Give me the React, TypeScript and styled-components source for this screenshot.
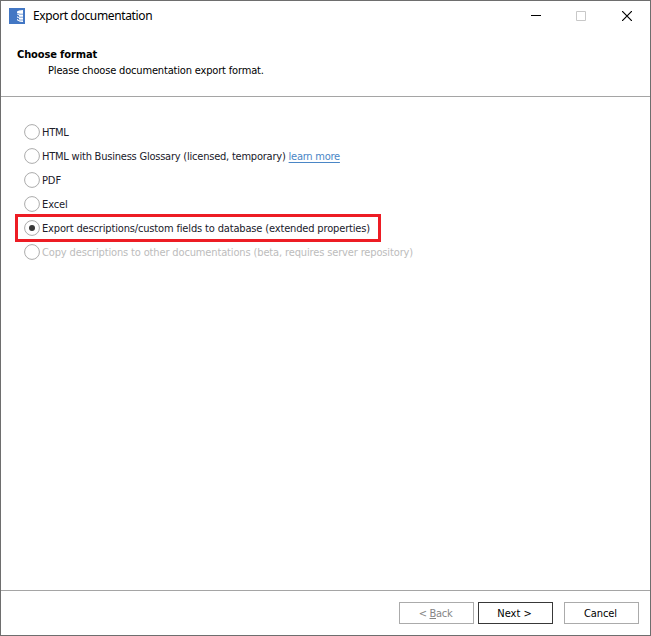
import React from "react";
import styled, { createGlobalStyle } from "styled-components";

const GlobalStyle = createGlobalStyle`
  * { box-sizing: border-box; }
  body { margin: 0; background: #fff; }
`;

const Dialog = styled.main`
  width: 651px;
  height: 636px;
  display: flex;
  flex-direction: column;
  border: 1px solid #6e6e6e;
  background: #fff;
  color: #000;
  font: 11px/16px "DejaVu Sans Condensed", "Noto Sans", sans-serif;
  overflow: hidden;
`;

const TitleBar = styled.header`
  display: flex;
  align-items: center;
  height: 29px;
  flex: none;
  padding-left: 8px;
`;

const AppIcon = styled.svg`
  width: 16px;
  height: 16px;
  flex: none;
`;

const Text = styled.span<{ $track?: number }>`
  letter-spacing: ${(p) => p.$track ?? 0}px;
  white-space: pre;
`;

const WindowTitle = styled(Text)`
  margin-left: 8px;
  font: 12px/16px "Noto Sans", sans-serif;
`;

const WindowControls = styled.div`
  display: flex;
  margin-left: auto;
`;

const ControlButton = styled.button<{ $w: number }>`
  width: ${(p) => p.$w}px;
  height: 29px;
  padding: 0;
  border: 0;
  background: none;
  display: grid;
  place-items: center;
`;

const Heading = styled.section`
  height: 67px;
  flex: none;
  display: flex;
  flex-direction: column;
  align-items: flex-start;
  padding: 17px 0 0 16px;
  border-bottom: 1px solid #a5a5a5;
`;

const HeadingTitle = styled(Text)`
  font-weight: bold;
`;

const HeadingText = styled(Text)`
  margin-left: 31px;
`;

const Options = styled.section`
  flex: 1;
  display: flex;
  flex-direction: column;
  align-items: flex-start;
  padding: 23px 0 0 14px;
`;

const Option = styled.label<{ $disabled?: boolean; $marked?: boolean }>`
  display: flex;
  align-items: center;
  height: ${(p) => (p.$marked ? 28 : 24)}px;
  width: ${(p) => (p.$marked ? "366px" : "auto")};
  margin: ${(p) => (p.$marked ? "-2px 0" : "0")};
  padding-left: ${(p) => (p.$marked ? 6 : 9)}px;
  border: ${(p) => (p.$marked ? "3px solid #ed1c24" : "0")};
  color: ${(p) => (p.$disabled ? "#bcbcbc" : "#20202a")};
`;

const OptionText = styled(Text)`
  padding-top: 2px;
`;

const Radio = styled.svg`
  width: 16px;
  height: 16px;
  margin-right: 2px;
  flex: none;
`;

const Link = styled.a`
  margin-left: 3px;
  padding-top: 2px;
  color: #4a86c6;
  letter-spacing: -0.25px;
  text-decoration: underline;
  text-underline-offset: 2px;
  text-decoration-thickness: 1px;
  white-space: nowrap;
`;

const Footer = styled.footer`
  height: 45px;
  flex: none;
  display: flex;
  justify-content: flex-end;
  align-items: flex-start;
  padding: 11px 11px 0 0;
  border-top: 1px solid #a5a5a5;
`;

const Button = styled.button<{ $primary?: boolean }>`
  width: 75px;
  height: 22px;
  margin-right: ${(p) => (p.$primary ? 11 : 0)}px;
  padding: 2px 2px 0 0;
  border: 1px solid ${(p) => (p.$primary ? "#383838" : "#ababab")};
  background: #fff;
  color: #000;
  font: inherit;
  &:disabled { color: #868686; margin-right: 4px; }
`;

const options = [
  { label: "HTML", track: -0.3 },
  { label: "HTML with Business Glossary (licensed, temporary)", track: -0.22, link: "learn more" },
  { label: "PDF", track: -0.1 },
  { label: "Excel", track: -0.1 },
  { label: "Export descriptions/custom fields to database (extended properties)", track: -0.155, selected: true },
  { label: "Copy descriptions to other documentations (beta, requires server repository)", track: -0.14, disabled: true },
];

export default function App() {
  return (
    <>
      <GlobalStyle />
      <Dialog>
        <TitleBar>
          <AppIcon viewBox="0 0 16 16">
            <path fill="#4377c4" d="M0 0h16v16H0z" />
            <path fill="#fff" d="M8 3.500 10 2.500 14 2v12l-3-.2-3-1.600v-1.200l2 .7v-1.400L8 9.600V8.200l2 .8V7.500L8 6.200z" />
            <path stroke="#4377c4" strokeWidth=".7" fill="none" d="m8 5.300 3 .9h3M9 8.600l2 .6h3M9 11.400l2 .6h3" />
          </AppIcon>
          <WindowTitle $track={-0.36}>Export documentation</WindowTitle>
          <WindowControls>
            <ControlButton $w={46} aria-label="Minimize">
              <svg width="10" height="10"><path d="M0 4.500h10" stroke="#000" /></svg>
            </ControlButton>
            <ControlButton $w={44} aria-label="Maximize" disabled>
              <svg width="10" height="10"><path d="M.5.5h9v9h-9z" fill="none" stroke="#c8c8c8" /></svg>
            </ControlButton>
            <ControlButton $w={47} aria-label="Close">
              <svg width="10" height="10"><path d="m0 0 10 10M10 0 0 10" stroke="#000" strokeWidth="1.2" /></svg>
            </ControlButton>
          </WindowControls>
        </TitleBar>
        <Heading>
          <HeadingTitle $track={-0.12}>Choose format</HeadingTitle>
          <HeadingText $track={-0.17}>Please choose documentation export format.</HeadingText>
        </Heading>
        <Options>
          {options.map((o) => (
            <Option key={o.label} $disabled={o.disabled} $marked={o.selected}>
              <Radio viewBox="0 0 16 16">
                <circle cx="8" cy="8" r="7.4" fill="#fff" stroke="#ababab" />
                {o.selected && <circle cx="8" cy="8" r="3" fill="#383838" />}
              </Radio>
              <OptionText $track={o.track}>{o.label}</OptionText>
              {o.link && <Link>{o.link}</Link>}
            </Option>
          ))}
        </Options>
        <Footer>
          <Button disabled><Text $track={-0.3}>{"< "}<u>B</u>ack</Text></Button>
          <Button $primary><Text>{"Next >"}</Text></Button>
          <Button><Text $track={-0.1}>Cancel</Text></Button>
        </Footer>
      </Dialog>
    </>
  );
}
